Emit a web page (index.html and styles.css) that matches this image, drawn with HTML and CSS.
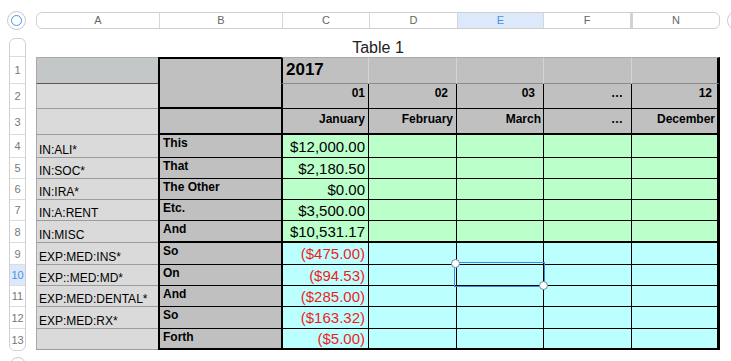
FILE: index.html
```html
<!DOCTYPE html>
<html lang="en">
<head>
    <meta charset="UTF-8">
    <title>Table 1</title>
    <link rel="stylesheet" href="styles.css">
</head>
<body>
    <div class="sheet-window">
        <div class="select-all"><span class="select-ring"></span></div>
        <div class="col-heads">
            <div class="col-head">A</div>
            <div class="col-head">B</div>
            <div class="col-head">C</div>
            <div class="col-head">D</div>
            <div class="col-head active">E</div>
            <div class="col-head hidden-after">F</div>
            <div class="col-head">N</div>
        </div>
        <div class="edge-btn"></div>

        <div class="gutter">
            <div class="row-heads">
                <div class="row-head row-head-top"></div>
                <div class="row-head h-year">1</div>
                <div class="row-head h-num">2</div>
                <div class="row-head h-month">3</div>
                <div class="row-head h-first">4</div>
                <div class="row-head h-body">5</div>
                <div class="row-head h-body">6</div>
                <div class="row-head h-body">7</div>
                <div class="row-head h-tall">8</div>
                <div class="row-head h-tall">9</div>
                <div class="row-head h-body active">10</div>
                <div class="row-head h-body">11</div>
                <div class="row-head h-tall">12</div>
                <div class="row-head h-body">13</div>
            </div>
            <div class="add-row-btn"></div>
        </div>

        <div class="sheet">
            <div class="table-title">Table 1</div>
            <table class="grid">
                <colgroup>
                    <col style="width: 122px">
                    <col style="width: 123px">
                    <col style="width: 88px">
                    <col style="width: 88px">
                    <col style="width: 87px">
                    <col style="width: 88px">
                    <col style="width: 88px">
                </colgroup>

                <!-- year / month headers -->
                <tr class="h-year">
                    <td class="label label-top"></td>
                    <td class="side side-head" rowspan="2"></td>
                    <td class="yr first-col">2017</td>
                    <td class="yr"></td>
                    <td class="yr"></td>
                    <td class="yr"></td>
                    <td class="yr last-col"></td>
                </tr>
                <tr class="h-num">
                    <td class="label"></td>
                    <td class="hd first-col">01</td>
                    <td class="hd gap">02</td>
                    <td class="hd gap">03</td>
                    <td class="hd gap">…</td>
                    <td class="hd mid last-col">12</td>
                </tr>
                <tr class="h-month">
                    <td class="label"></td>
                    <td class="side side-rule"></td>
                    <td class="hd first-col">January</td>
                    <td class="hd">February</td>
                    <td class="hd tight">March</td>
                    <td class="hd gap">…</td>
                    <td class="hd tight last-col">December</td>
                </tr>

                <!-- income -->
                <tr class="h-first">
                    <td class="label">IN:ALI*</td>
                    <td class="side">This</td>
                    <td class="val in first-col">$12,000.00</td>
                    <td class="val in"></td>
                    <td class="val in"></td>
                    <td class="val in"></td>
                    <td class="val in last-col"></td>
                </tr>
                <tr class="h-body">
                    <td class="label">IN:SOC*</td>
                    <td class="side">That</td>
                    <td class="val in first-col">$2,180.50</td>
                    <td class="val in"></td>
                    <td class="val in"></td>
                    <td class="val in"></td>
                    <td class="val in last-col"></td>
                </tr>
                <tr class="h-body">
                    <td class="label">IN:IRA*</td>
                    <td class="side">The Other</td>
                    <td class="val in first-col">$0.00</td>
                    <td class="val in"></td>
                    <td class="val in"></td>
                    <td class="val in"></td>
                    <td class="val in last-col"></td>
                </tr>
                <tr class="h-body">
                    <td class="label">IN:A:RENT</td>
                    <td class="side">Etc.</td>
                    <td class="val in first-col">$3,500.00</td>
                    <td class="val in"></td>
                    <td class="val in"></td>
                    <td class="val in"></td>
                    <td class="val in last-col"></td>
                </tr>
                <tr class="h-tall group-end">
                    <td class="label">IN:MISC</td>
                    <td class="side">And</td>
                    <td class="val in first-col">$10,531.17</td>
                    <td class="val in"></td>
                    <td class="val in"></td>
                    <td class="val in"></td>
                    <td class="val in last-col"></td>
                </tr>

                <!-- expenses -->
                <tr class="h-tall">
                    <td class="label">EXP:MED:INS*</td>
                    <td class="side">So</td>
                    <td class="val out neg first-col">($475.00)</td>
                    <td class="val out"></td>
                    <td class="val out"></td>
                    <td class="val out"></td>
                    <td class="val out last-col"></td>
                </tr>
                <tr class="h-body">
                    <td class="label">EXP::MED:MD*</td>
                    <td class="side">On</td>
                    <td class="val out neg first-col">($94.53)</td>
                    <td class="val out"></td>
                    <td class="val out selected"><span class="sel-box"></span></td>
                    <td class="val out"></td>
                    <td class="val out last-col"></td>
                </tr>
                <tr class="h-body">
                    <td class="label">EXP:MED:DENTAL*</td>
                    <td class="side">And</td>
                    <td class="val out neg first-col">($285.00)</td>
                    <td class="val out"></td>
                    <td class="val out"></td>
                    <td class="val out"></td>
                    <td class="val out last-col"></td>
                </tr>
                <tr class="h-tall">
                    <td class="label">EXP:MED:RX*</td>
                    <td class="side">So</td>
                    <td class="val out neg first-col">($163.32)</td>
                    <td class="val out"></td>
                    <td class="val out"></td>
                    <td class="val out"></td>
                    <td class="val out last-col"></td>
                </tr>
                <tr class="h-body group-end">
                    <td class="label"></td>
                    <td class="side">Forth</td>
                    <td class="val out neg first-col">($5.00)</td>
                    <td class="val out"></td>
                    <td class="val out"></td>
                    <td class="val out"></td>
                    <td class="val out last-col"></td>
                </tr>
            </table>
        </div>
    </div>
</body>
</html>
```

FILE: styles.css
```css
* {
    box-sizing: border-box;
}

html, body {
    margin: 0;
    overflow: hidden;
    background-color: #fff;
}

body {
    font-family: "Liberation Sans", Arial, Helvetica, sans-serif;
    color: #000;
}

.sheet-window {
    display: grid;
    grid-template-columns: 36px 684px auto;
    grid-template-rows: 38px auto;
}

/* round buttons around the grid */
.select-all {
    width: 19px;
    height: 19px;
    margin: 11px 0 0 7px;
    border: 1px solid #c9c9c9;
    border-radius: 50%;
    display: flex;
    align-items: center;
    justify-content: center;
}

.select-ring {
    width: 11px;
    height: 11px;
    border: 1.5px solid #3d97f6;
    border-radius: 50%;
}

.edge-btn {
    width: 19px;
    height: 19px;
    margin: 11px 0 0 7px;
    border: 1px solid #c9c9c9;
    border-radius: 50%;
}

.add-row-btn {
    width: 16px;
    height: 16px;
    margin: 6px 0 0 1px;
    border: 1px solid #c9c9c9;
    border-radius: 50%;
}

/* column letters */
.col-heads {
    display: grid;
    grid-template-columns: 123px 123px 87px 88px 86px 89px 86px;
    height: 17px;
    margin-top: 12px;
    border: 1px solid #cfcfcf;
    border-radius: 6px;
    overflow: hidden;
}

.col-head {
    border-right: 1px solid #d7d7d7;
    text-align: center;
    font-size: 11px;
    line-height: 15px;
    color: #666;
}

.col-head:last-child {
    border-right: none;
}

.col-head.hidden-after {
    border-right: 3px solid #d2d2d2;
}

.col-head.active {
    background-color: #dbe9fb;
    color: #4a90e2;
}

/* row numbers */
.gutter {
    padding-left: 9px;
}

.row-heads {
    width: 17px;
    border: 1px solid #d0d0d0;
    border-radius: 6px;
    overflow: hidden;
}

.row-head {
    display: flex;
    align-items: center;
    justify-content: center;
    border-bottom: 1px solid #dcdcdc;
    font-size: 11px;
    color: #777;
}

.row-head:last-child {
    border-bottom: none;
}

.row-head-top {
    height: 18px;
}

.row-head.active {
    background-color: #dce9fc;
    color: #4a90e2;
}

/* shared row heights for numbers and table rows */
.h-year { height: 27px; }
.h-num { height: 25px; }
.h-month { height: 26px; }
.h-first { height: 23px; }
.h-body { height: 21px; }
.h-tall { height: 22px; }

/* table */
.table-title {
    height: 19px;
    line-height: 19px;
    text-align: center;
    font-size: 16px;
    color: #222;
}

.grid {
    width: 684px;
    table-layout: fixed;
    border-collapse: separate;
    border-spacing: 0;
}

.grid td {
    padding: 0;
    white-space: nowrap;
}

.label {
    background-color: #dadada;
    border-left: 1px solid #a9a9a9;
    border-bottom: 1px solid #9c9c9c;
    padding: 0 2px !important;
    font-size: 12px;
    line-height: 14px;
    vertical-align: bottom;
}

.label-top {
    background-color: #c3c7c7;
    border-top: 1px solid #a9a9a9;
    border-bottom-color: #595959;
}

.side {
    background-color: #c0c0c0;
    border-left: 2px solid #000;
    border-bottom: 1px solid #000;
    padding: 1px 3px 0 !important;
    font-size: 12px;
    font-weight: bold;
    line-height: 14px;
    vertical-align: top;
}

.side-head {
    border-top: 2px solid #000;
    border-bottom-width: 2px;
}

.side-rule {
    border-bottom-width: 2px;
}

.yr {
    background-color: #c0c0c0;
    border-top: 1px solid #a9a9a9;
    border-right: 1px solid #d4d4d4;
    border-bottom: 1px solid #8a8a8a;
    padding: 2px 0 0 3px !important;
    font-size: 17px;
    font-weight: bold;
    line-height: 20px;
    vertical-align: top;
}

.hd {
    background-color: #c0c0c0;
    border-right: 1px solid #000;
    border-bottom: 1px solid #000;
    padding: 2px 3px 0 0 !important;
    font-size: 12px;
    font-weight: bold;
    line-height: 14px;
    text-align: right;
    vertical-align: top;
}

.h-month .hd {
    padding-top: 3px !important;
    border-bottom-width: 2px;
}

.hd.gap {
    padding-right: 8px !important;
}

.hd.mid {
    padding-right: 5px !important;
}

.hd.tight {
    padding-right: 2px !important;
}

.val {
    border-right: 1px solid #000;
    border-bottom: 1px solid #000;
    padding: 0 3px 0 0 !important;
    font-size: 15px;
    line-height: 17px;
    text-align: right;
    vertical-align: middle;
}

.val.in {
    background-color: #bbffca;
}

.val.out {
    background-color: #bbffff;
}

.neg {
    color: #f21b1b;
}

.group-end .side,
.group-end .val {
    border-bottom-width: 2px;
}

.first-col {
    border-left: 2px solid #000;
}

.last-col {
    border-right: 3px solid #000;
}

/* selected cell outline with drag handles */
.selected {
    position: relative;
}

.sel-box {
    position: absolute;
    left: -3px;
    top: -3px;
    right: -2px;
    bottom: -2px;
    border: 1px solid #4688e2;
}

.sel-box::before,
.sel-box::after {
    content: "";
    position: absolute;
    width: 7px;
    height: 7px;
    border: 1px solid #7986a6;
    border-radius: 50%;
    background-color: #fff;
}

.sel-box::before {
    left: -4px;
    top: -4px;
}

.sel-box::after {
    right: -4px;
    bottom: -4px;
}
```
